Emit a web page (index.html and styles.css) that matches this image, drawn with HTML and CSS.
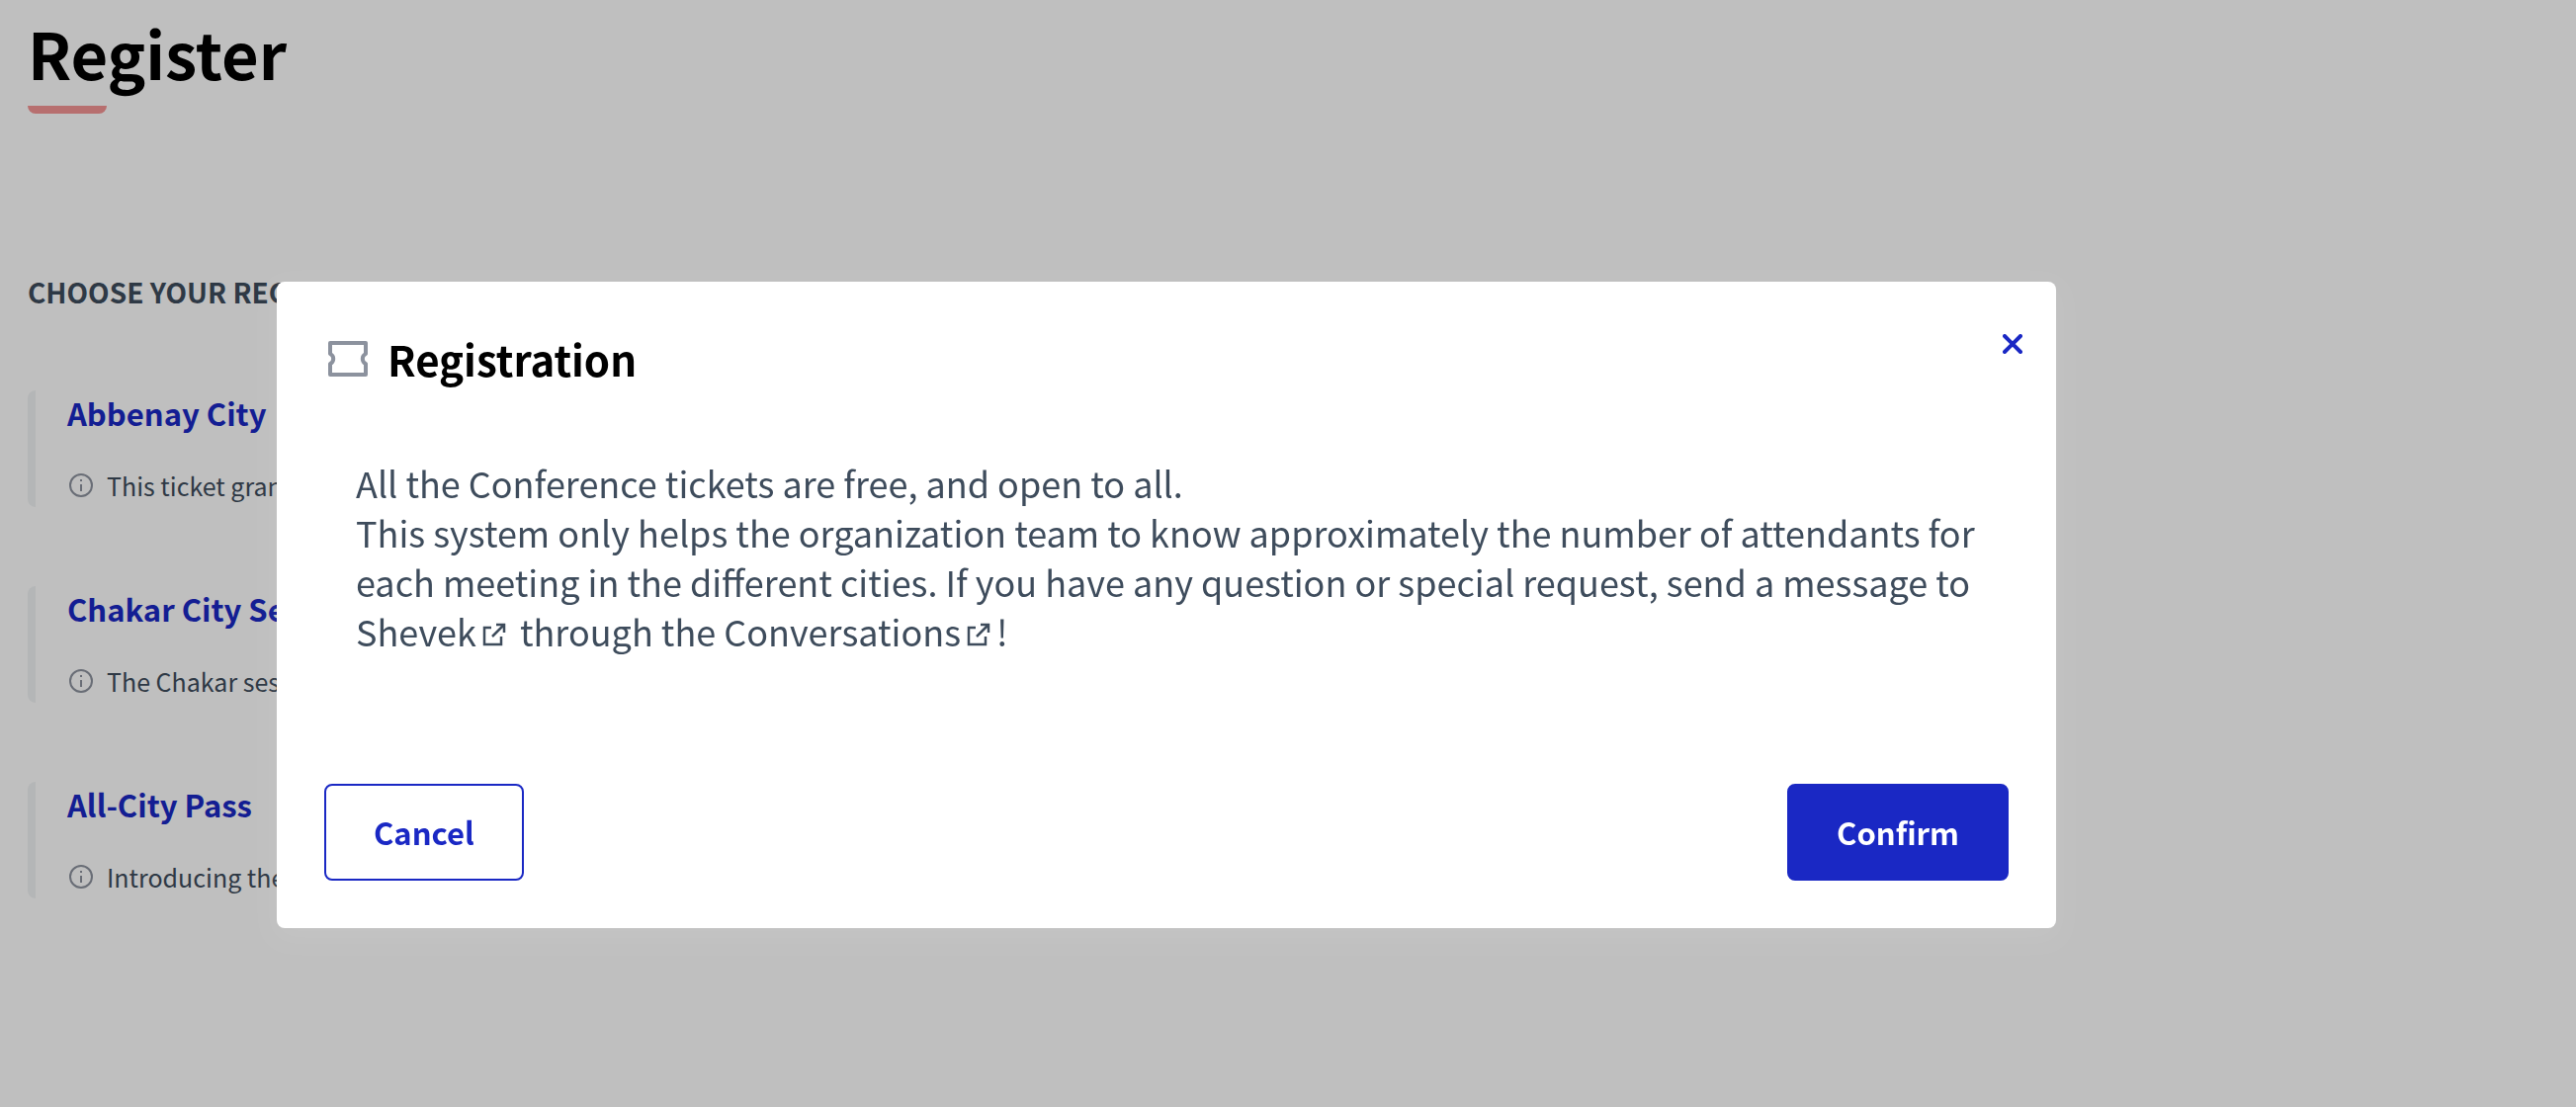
FILE: index.html
```html
<!DOCTYPE html>
<html lang="en">
<head>
<meta charset="utf-8">
<meta name="viewport" content="width=device-width, initial-scale=1">
<title>Register</title>
<link rel="stylesheet" href="styles.css">
</head>
<body>
<main class="page">
  <h1 class="page-title">Register</h1>
  <h2 class="section-title">Choose your registration</h2>
  <ul class="tickets">
    <li class="ticket">
      <a class="ticket-name" href="#abbenay">Abbenay City</a>
      <p class="ticket-info">
        <svg class="info-icon" viewBox="0 0 24 24" aria-hidden="true"><circle cx="12" cy="12" r="11"/><path d="M12 11v7M12 6v2"/></svg>
        <span>This ticket grants access</span>
      </p>
    </li>
    <li class="ticket">
      <a class="ticket-name" href="#chakar">Chakar City Session</a>
      <p class="ticket-info">
        <svg class="info-icon" viewBox="0 0 24 24" aria-hidden="true"><circle cx="12" cy="12" r="11"/><path d="M12 11v7M12 6v2"/></svg>
        <span>The Chakar session</span>
      </p>
    </li>
    <li class="ticket">
      <a class="ticket-name" href="#all-city">All-City Pass</a>
      <p class="ticket-info">
        <svg class="info-icon" viewBox="0 0 24 24" aria-hidden="true"><circle cx="12" cy="12" r="11"/><path d="M12 11v7M12 6v2"/></svg>
        <span>Introducing the pass</span>
      </p>
    </li>
  </ul>
</main>

<div class="overlay">
  <section class="dialog" role="dialog" aria-modal="true" aria-labelledby="dialog-title">
    <header class="dialog-header">
      <svg class="ticket-icon" viewBox="0 0 40 36" aria-hidden="true"><path d="M2 2h36v11a5.500 5.500 0 0 0 0 10V34H2V23a5.500 5.500 0 0 0 0-10z"/></svg>
      <h2 class="dialog-title" id="dialog-title">Registration</h2>
      <button class="close" type="button" aria-label="Close">
        <svg class="close-icon" viewBox="0 0 20 20" aria-hidden="true"><path d="M2 2l16 16M18 2L2 18"/></svg>
      </button>
    </header>
    <div class="dialog-body">
      <p>All the Conference tickets are free, and open to all.</p>
      <p>This system only helps the organization team to know approximately the number of attendants for each meeting in the different cities. If you have any question or special request, send a message to <a href="#shevek">Shevek<svg class="external-icon" viewBox="0 0 24 24" aria-hidden="true"><path d="M9 5H2v17h17v-8M10 14L22 2M14 2h8v8"/></svg></a> through the <a href="#conversations">Conversations<svg class="external-icon" viewBox="0 0 24 24" aria-hidden="true"><path d="M9 5H2v17h17v-8M10 14L22 2M14 2h8v8"/></svg></a>!</p>
    </div>
    <footer class="dialog-footer">
      <button class="button button-outline" type="button">Cancel</button>
      <button class="button button-solid" type="button">Confirm</button>
    </footer>
  </section>
</div>
</body>
</html>
```
FILE: styles.css
```css
:root {
  --brand: #1a28c4;
  --text: #3e4c5c;
  --muted: #8c929e;
}

* {
  box-sizing: border-box;
}

body,
h1,
h2,
p,
ul {
  margin: 0;
}

body {
  background: #fff;
  color: var(--text);
  font-family: "Noto Sans CJK SC", "Noto Sans", sans-serif;
}

a {
  color: inherit;
  text-decoration: none;
}

svg {
  fill: none;
  stroke: currentColor;
}

.page {
  padding: 8px 28px;
}

.page-title {
  color: #000;
  font-size: 65px;
  line-height: 90px;
}

.page-title::after {
  content: "";
  display: block;
  width: 80px;
  height: 8px;
  margin-top: 9px;
  border-radius: 0 0 8px 8px;
  background: #f59494;
}

.section-title {
  margin-top: 160px;
  font-size: 28px;
  line-height: 40px;
  text-transform: uppercase;
}

.tickets {
  display: grid;
  gap: 80px;
  margin-top: 80px;
  padding: 0;
  list-style: none;
}

.ticket {
  padding: 0 0 2px 32px;
  border-left: 8px solid #f1f3f5;
  border-radius: 8px 0 0 8px;
}

.ticket-name {
  display: block;
  color: var(--brand);
  font-size: 31px;
  font-weight: 700;
  line-height: 46px;
}

.ticket-info {
  display: flex;
  align-items: center;
  gap: 14px;
  margin-top: 30px;
  padding-left: 2px;
  font-size: 25px;
  line-height: 40px;
}

.info-icon {
  width: 24px;
  height: 24px;
  color: var(--muted);
  stroke-width: 2;
}

.overlay {
  position: fixed;
  inset: 0;
  display: flex;
  align-items: center;
  justify-content: center;
  padding: 104px 246px 0 0;
  background: rgb(0 0 0 / 25%);
}

.dialog {
  width: 100%;
  max-width: 1800px;
  padding: 48px;
  border-radius: 8px;
  background: #fff;
  box-shadow: 0 8px 24px rgb(255 255 255 / 8%);
}

.dialog-header {
  display: flex;
  align-items: center;
  padding-left: 4px;
}

.ticket-icon {
  width: 40px;
  height: 36px;
  margin-right: 20px;
  color: var(--muted);
  stroke-width: 4;
  stroke-linejoin: round;
}

.dialog-title {
  color: #000;
  font-size: 42px;
  line-height: 60px;
}

.close {
  display: flex;
  align-self: flex-start;
  margin: 0 -24px 0 auto;
  padding: 5px 10px;
  border: 0;
  background: none;
  color: var(--brand);
}

.close-icon {
  width: 20px;
  height: 20px;
  stroke-width: 4;
  stroke-linecap: round;
}

.dialog-body {
  padding: 70px 32px 130px;
  font-size: 36px;
  line-height: 50px;
}

.external-icon {
  width: 24px;
  height: 24px;
  margin: 0 6px;
  stroke-width: 2.5;
}

.dialog-footer {
  display: flex;
  justify-content: space-between;
}

.button {
  padding: 22px 48px;
  border: 2px solid var(--brand);
  border-radius: 8px;
  font: inherit;
  font-size: 31px;
  font-weight: 700;
  line-height: 50px;
}

.button-outline {
  background: #fff;
  color: var(--brand);
}

.button-solid {
  background: var(--brand);
  color: #fff;
}
```
